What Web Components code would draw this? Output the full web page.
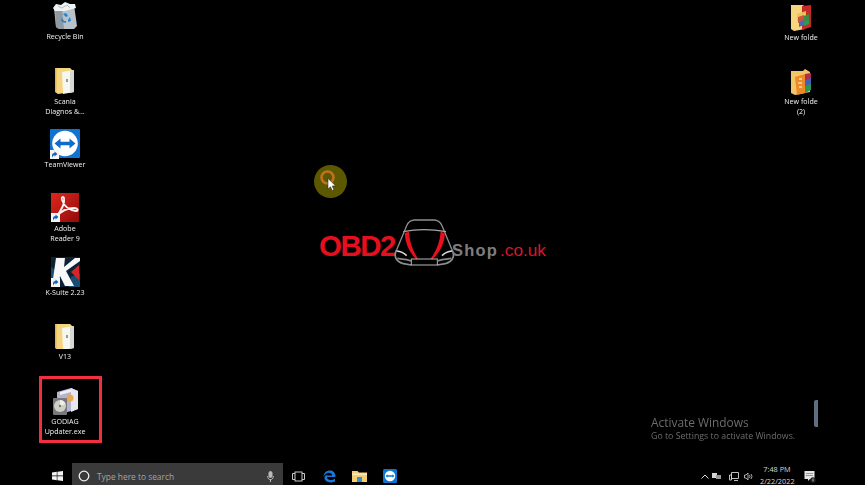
<!doctype html>
<html>
<head>
<meta charset="utf-8">
<style>
  html, body { margin: 0; background: #000; }
</style>
</head>
<body>
<desk-top>
  <desk-icon x="34" y="2" w="26" h="28" icon="bin" gap="2">Recycle Bin</desk-icon>
  <desk-icon x="34" y="67" w="21" h="27" icon="folder" gap="3">Scania<br>Diagnos &amp;...</desk-icon>
  <desk-icon x="34" y="129" w="30" h="30" icon="teamviewer" gap="1">TeamViewer</desk-icon>
  <desk-icon x="34" y="193" w="29" h="29" icon="adobe" gap="2">Adobe<br>Reader 9</desk-icon>
  <desk-icon x="34" y="257" w="29" h="30" icon="ksuite" gap="1">K-Suite 2.23</desk-icon>
  <desk-icon x="34" y="323" w="20" h="26" icon="folder" gap="3">V13</desk-icon>
  <desk-icon x="34" y="388" w="27" h="28" icon="godiag" gap="1">GODIAG<br>Updater.exe</desk-icon>
  <desk-icon x="770" y="4" w="21" h="27" icon="folderred" gap="2">New folde</desk-icon>
  <desk-icon x="770" y="68" w="21" h="27" icon="folderorange" gap="2">New folde<br>(2)</desk-icon>
  <mark-box></mark-box>
  <click-ring></click-ring>
  <brand-logo></brand-logo>
  <activate-note></activate-note>
  <task-bar slot="bar"></task-bar>
</desk-top>

<script>
const shortcut = (x, y) => `
  <g transform="translate(${x} ${y})">
    <rect width="9" height="9" fill="#f4f4f4"/>
    <path d="M2 7.500V5q0-2 2.500-2V1.500L7.500 4 4.500 6.500V5Q3.200 5 2 7.500z" fill="#1b5fc4"/>
  </g>`;

const plainFolder = `
  <path d="M0 1h15l2 2v22L3 27 0 25z" fill="#f6d67c"/>
  <path d="M0 1h1.500v24H0z" fill="#e3b54f"/>
  <path d="M7 5l12-2v22L8 27z" fill="#f7f7f2"/>
  <path d="M15 4l4-1v22l-4 1z" fill="#d8d8d2"/>
  <rect x="11" y="12" width="2" height="3" fill="#9a9a9a"/>`;

const ICONS = {
  bin: `
    <path d="M2 6l20-3 3 21-3 3H7l-3-2z" fill="#b9c2c8"/>
    <path d="M3 7l7-1 2 21H7l-3-2z" fill="#8f9aa2"/>
    <path d="M1 6l3-4 5 1 4-3 5 2 5 0 1 4-11 3L3 9z" fill="#f1f3f4"/>
    <path d="M6 4l4 2 5-3 3 3" stroke="#aab1b6" stroke-width=".8" fill="none"/>
    <path d="M11 12l3-1 2 3-2 1zM18 15l1 4-3 1v-2zM10 16l2 3 2 0v2l-4-1-1-2z" fill="#1d86dc"/>`,
  folder: plainFolder,
  folderred: `
    <path d="M0 1h12l2 2v22L3 27 0 25z" fill="#f6d67c"/>
    <path d="M11 2l9-1v22l-9 3z" fill="#c62a26"/>
    <path d="M6 10l9-3v7l-9 3z" fill="#e9c35a"/>
    <path d="M7 13l6-2v6l-6 2z" fill="#d0533e"/>
    <path d="M13 12l5-2v5l-5 2z" fill="#3f8a45"/>
    <path d="M8 18l5-2v5l-5 2z" fill="#4a68c0"/>
    <path d="M13 17l5-2v5l-5 2z" fill="#2d9a52"/>`,
  folderorange: `
    <path d="M0 3h12l2-2 5 3v20L4 27 0 25z" fill="#f3c566"/>
    <path d="M4 9l10-3v19L6 27z" fill="#ec8a28"/>
    <path d="M14 6l6-1v8l-6 2z" fill="#b32b50"/>
    <path d="M14 12l6-2v7l-6 2z" fill="#3d62b8"/>
    <path d="M14 18l6-2v6l-6 3z" fill="#2e9550"/>
    <path d="M8 11h3M7 15h4M8 19h3" stroke="#f9d9a6" stroke-width="1.300"/>`,
  teamviewer: `
    <rect x="0" y="0" width="30" height="29" rx="1" fill="#0f73d2"/>
    <circle cx="15" cy="14.500" r="12.800" fill="#fff"/>
    <path d="M4.500 14.500l6-5v3.300h9V9.500l6 5-6 5v-3.300h-9v3.300z" fill="#0f6cc8"/>
    ${shortcut(0, 21)}`,
  adobe: `
    <defs><linearGradient id="ad" x1="0" y1="0" x2="1" y2="1">
      <stop offset="0" stop-color="#e0261d"/><stop offset="1" stop-color="#8f0c0a"/>
    </linearGradient></defs>
    <rect width="28" height="29" fill="url(#ad)"/>
    <path d="M5 24C10 18 14 10 13 5 12 3 10 4 11 7c2 6 7 10 14 11 3 0 2-3-2-3-7 0-13 3-18 9"
      fill="none" stroke="#fdf2f2" stroke-width="1.800"/>
    ${shortcut(0, 20)}`,
  ksuite: `
    <rect width="29" height="30" fill="#0c2233"/>
    <path d="M0 10l10 8-6 12H0zM20 20l9-4v14H18z" fill="#1d5a80" opacity=".8"/>
    <path d="M5 1h9l-1 9L24 1h5v3L15 14l8 15h-9l-5-10-2 10H1z" fill="#f7f8fa"/>
    <path d="M28 8v15l-8-8z" fill="#d8252c"/>
    ${shortcut(0, 21)}`,
  godiag: `
    <path d="M5 4l14-4 7 3v18L12 25 5 22z" fill="#b6b3d2"/>
    <path d="M19 0l7 3v18l-7 3z" fill="#e6e6f0"/>
    <path d="M8 4l11-3v3L8 7z" fill="#efeff6"/>
    <circle cx="18" cy="10" r="3.500" fill="#e6a94e"/>
    <rect x="1" y="10" width="14" height="17" rx="1" fill="#77787a"/>
    <circle cx="8" cy="18" r="6" fill="#cfcfc6"/>
    <path d="M8 12a6 6 0 0 1 5.500 4L8 18z" fill="#eeede6"/>
    <circle cx="8" cy="18" r="1.200" fill="#77787a"/>`
};

class DeskTop extends HTMLElement {
  connectedCallback() {
    this.attachShadow({ mode: "open" }).innerHTML = `
      <style>
        :host { display: flex; flex-direction: column; width: 865px; height: 485px; background: #000;
                overflow: hidden; font-family: "Open Sans", "Noto Sans", sans-serif; }
        .canvas { position: relative; flex: 1; }
      </style>
      <div class="canvas"><slot></slot></div>
      <slot name="bar"></slot>`;
  }
}

class DeskIcon extends HTMLElement {
  connectedCallback() {
    const w = this.getAttribute("w"), h = this.getAttribute("h");
    const x = this.getAttribute("x"), y = this.getAttribute("y");
    const gap = this.getAttribute("gap") || 2;
    this.attachShadow({ mode: "open" }).innerHTML = `
      <style>
        :host { position: absolute; left: ${x}px; top: ${y}px; width: 62px; display: flex;
                flex-direction: column; align-items: center; gap: ${gap}px; }
        svg { display: block; filter: blur(.35px); }
        .label { font-size: 7.100px; line-height: 9.500px; color: #f2f2f2; text-align: center;
                 white-space: nowrap; filter: blur(.2px); }
      </style>
      <svg width="${w}" height="${h}" viewBox="0 0 ${w} ${h}">${ICONS[this.getAttribute("icon")]}</svg>
      <div class="label"><slot></slot></div>`;
  }
}

class MarkBox extends HTMLElement {
  connectedCallback() {
    this.attachShadow({ mode: "open" }).innerHTML = `
      <style>
        :host { position: absolute; left: 39px; top: 376px; width: 57px; height: 61px;
                border: 3px solid #f0303c; display: block; }
      </style>`;
  }
}

class ClickRing extends HTMLElement {
  connectedCallback() {
    this.attachShadow({ mode: "open" }).innerHTML = `
      <style>
        :host { position: absolute; left: 314px; top: 165px; width: 34px; height: 34px; display: block; }
        svg { display: block; filter: blur(.3px); }
      </style>
      <svg width="34" height="34" viewBox="0 0 34 34">
        <circle cx="16.500" cy="16.500" r="16.500" fill="#5c5800"/>
        <circle cx="13.500" cy="12.500" r="6" fill="none" stroke="#c0721c" stroke-width="2.500"/>
        <path d="M14 13.500v10.500l2.500-2.200 1.700 3.700 1.700-.8-1.700-3.600 3.300-.3z" fill="#fff" stroke="#222" stroke-width=".5"/>
      </svg>`;
  }
}

class BrandLogo extends HTMLElement {
  connectedCallback() {
    this.attachShadow({ mode: "open" }).innerHTML = `
      <style>
        :host { position: absolute; left: 319px; top: 215px; height: 55px; display: flex; align-items: flex-start;
                font-family: "Liberation Sans", Arial, sans-serif; }
        .obd { color: #e60f1e; font-weight: 700; font-size: 29.500px; letter-spacing: -1.500px;
               line-height: 30px; margin-top: 16px; width: 77px; }
        svg { display: block; flex: none; margin: 0 -6px 0 -4px; }
        .shop { color: #7e7e7e; font-weight: 700; font-size: 16.500px; letter-spacing: 1.200px;
                line-height: 20px; margin-top: 25px; }
        .tld { color: #d8182a; font-size: 17.200px; line-height: 20px; margin-top: 25px; margin-left: 2px; }
      </style>
      <span class="obd">OBD2</span>
      <svg width="66" height="55" viewBox="0 0 198 165" fill="none">
        <path d="M14 104L44 32Q50 17 66 15h62q16 2 22 17l30 72" stroke="#8e8e8e" stroke-width="4"/>
        <path d="M34 50q30-6 62-6t66 6" stroke="#a6a6a6" stroke-width="3.500"/>
        <path d="M14 104q-8 14-2 26 4 10 22 16l24 4M180 104q8 14 2 26-4 10-22 16l-24 4" stroke="#8e8e8e" stroke-width="5"/>
        <path d="M38 54q3 48 35 79l5-2Q53 94 51 50z" fill="#e8101e"/>
        <path d="M159 54q-3 48-38 79l-5-2q27-37 30-81z" fill="#e8101e"/>
        <rect x="58" y="132" width="78" height="18" stroke="#b8b8b8" stroke-width="3"/>
        <path d="M14 108q18 2 30 14M180 108q-18 2-30 14" stroke="#d8d8d8" stroke-width="5"/>
        <path d="M16 130q16 2 28 4l14 4M178 130q-16 2-28 4l-14 4" stroke="#8a8a8a" stroke-width="5"/>
      </svg>
      <span class="shop">Shop</span><span class="tld">.co.uk</span>`;
  }
}

class ActivateNote extends HTMLElement {
  connectedCallback() {
    this.attachShadow({ mode: "open" }).innerHTML = `
      <style>
        :host { position: absolute; left: 651px; top: 414px; display: block; color: #6c6c6c;
                white-space: nowrap; filter: blur(.2px); }
        .big { font-size: 11.900px; line-height: 16px; }
        .small { font-size: 8.800px; line-height: 12px; }
        .sliver { position: absolute; left: 163px; top: -14px; width: 4px; height: 27px;
                  border-radius: 2px 0 0 2px; background: #5f6f80; }
      </style>
      <div class="sliver"></div>
      <div class="big">Activate Windows</div>
      <div class="small">Go to Settings to activate Windows.</div>`;
  }
}

class TaskBar extends HTMLElement {
  connectedCallback() {
    this.attachShadow({ mode: "open" }).innerHTML = `
      <style>
        :host { display: flex; align-items: center; height: 22px; padding-left: 52px; background: #000;
                font-family: "Open Sans", "Noto Sans", sans-serif; }
        svg { display: block; flex: none; filter: blur(.25px); }
        .start, .apps, .tray { margin-top: 4px; }
        .search { display: flex; align-items: center; width: 211px; height: 22px; margin-left: 9px;
                  background: #3a3a3a; color: #a4a4a4; font-size: 8.400px; box-sizing: border-box;
                  padding: 4px 0 0 6px; }
        .search span { margin-left: 7px; flex: 1; white-space: nowrap; }
        .search .mic { margin-right: 9px; }
        .apps { display: flex; align-items: center; gap: 17px; margin-left: 9px; }
        .tray { margin-left: auto; display: flex; align-items: center; margin-right: 49px; }
        .clock { color: #d8d8d8; font-size: 7.300px; line-height: 12px; text-align: center; width: 34px;
                 margin: -2px 0 0 7px; white-space: nowrap; }
      </style>
      <svg class="start" width="11" height="10" viewBox="0 0 11 10" fill="#f2f2f2">
        <path d="M0 1.500L4.800.8v3.800H0zM5.400.7L11 0v4.600H5.400zM0 5.300h4.800v3.900L0 8.500zM5.400 5.300H11V10l-5.600-.7z"/>
      </svg>
      <div class="search">
        <svg width="12" height="12" viewBox="0 0 12 12"><circle cx="6" cy="6" r="4.800" fill="none" stroke="#eee" stroke-width="1.300"/></svg>
        <span>Type here to search</span>
        <svg class="mic" width="7" height="11" viewBox="0 0 7 11" fill="none" stroke="#bbb">
          <rect x="2" y=".5" width="3" height="6" rx="1.500" fill="#bbb"/>
          <path d="M.7 5c0 5 5.600 5 5.600 0M3.500 8v3"/>
        </svg>
      </div>
      <div class="apps">
        <svg width="13" height="11" viewBox="0 0 13 11" fill="none" stroke="#ddd" stroke-width=".9">
          <rect x="3" y="1" width="7" height="9"/><path d="M3 2.500H.5v6H3M10 2.500h2.500v6H10"/>
        </svg>
        <svg width="13" height="13" viewBox="0 0 13 13" style="margin-left:1px">
          <path d="M.5 6.500C1 2.500 3.500.5 7 .5c3.500 0 5.500 2.500 5.500 6.500H4c0 3.500 5 4 8 1.500v3C8 13.500 1 12.500 1.500 7c1-2 2.500-3 3-3-1 .5-1.500 1.200-1 1.500h5.500C9 3.500 7.800 2.700 6.300 2.700 4 2.700 1.700 4 .5 6.500z" fill="#1a78d8"/>
        </svg>
        <svg width="15" height="12" viewBox="0 0 15 12" style="margin-left:-1px">
          <path d="M0 1h5.500l1.500 1.500h8V12H0z" fill="#f2cf72"/>
          <path d="M0 3.500h15V5H0z" fill="#fbeab8"/>
          <rect x="5" y="7" width="5" height="5" fill="#3e8ecf"/>
        </svg>
        <svg width="14" height="14" viewBox="0 0 14 14" style="margin-left:-1px">
          <rect width="14" height="14" rx="1.500" fill="#0f73d2"/>
          <circle cx="7" cy="7" r="5.200" fill="#fff"/>
          <path d="M2.500 7l2-1.700v1h5v-1l2 1.700-2 1.700v-1h-5v1z" fill="#0f73d2"/>
        </svg>
      </div>
      <div class="tray">
        <svg width="8" height="5" viewBox="0 0 8 5" fill="none" stroke="#ddd"><path d="M.5 4.500L4 1l3.500 3.500"/></svg>
        <svg width="9" height="8" viewBox="0 0 9 8" style="margin-left:3px" fill="#d5d5d5">
          <rect x="0" y="1" width="5" height="5"/><rect x="4" y="3" width="5" height="4" fill="#999"/>
        </svg>
        <svg width="10" height="9" viewBox="0 0 10 9" style="margin-left:8px" fill="none" stroke="#d5d5d5" stroke-width=".9">
          <path d="M2.500.5h7v6h-7zM.5 3h2v5h-2zM5 8.500h4"/>
        </svg>
        <svg width="9" height="9" viewBox="0 0 9 9" style="margin-left:5px" fill="none" stroke="#cfcfcf" stroke-width=".8">
          <path d="M.5 3h1.500L4 1v7L2 6H.5zM5.500 3q1 1.500 0 3M7 2q2 2.500 0 5"/>
        </svg>
        <div class="clock">7:48 PM<br>2/22/2022</div>
        <svg width="12" height="13" viewBox="0 0 12 13" style="margin-left:10px">
          <path d="M.5 1h10v8H6l-2 2V9H.5z" fill="#e6e6e6"/>
          <path d="M2 3.500h7M2 5.500h7" stroke="#777" stroke-width=".7"/>
          <circle cx="9" cy="10" r="2.700" fill="#222"/>
          <path d="M9 8.500v3" stroke="#ddd" stroke-width=".8"/>
        </svg>
      </div>`;
  }
}

customElements.define("desk-top", DeskTop);
customElements.define("desk-icon", DeskIcon);
customElements.define("mark-box", MarkBox);
customElements.define("click-ring", ClickRing);
customElements.define("brand-logo", BrandLogo);
customElements.define("activate-note", ActivateNote);
customElements.define("task-bar", TaskBar);
</script>
</body>
</html>
